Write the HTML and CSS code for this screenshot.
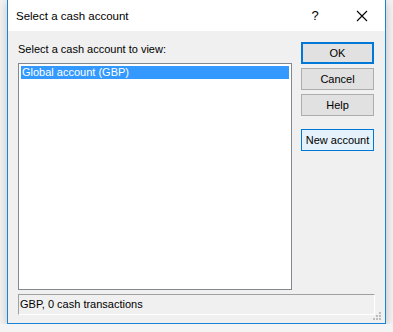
FILE: index.html
```html
<!DOCTYPE html>
<html lang="en">
<head>
  <meta charset="UTF-8" />
  <title>Select a cash account</title>
  <link rel="stylesheet" href="styles.css">
</head>
<body>
  <div class="window">
    <div class="titlebar">
      <span class="title">Select a cash account</span>
      <span class="help-btn">?</span>
      <span class="close-btn">
        <svg width="12" height="12" viewBox="0 0 12 12"><path d="M1 1 L11 11 M11 1 L1 11" stroke="#000" stroke-width="1.1" fill="none"/></svg>
      </span>
    </div>
    <div class="content">
      <div class="left">
        <div class="label">Select a cash account to view:</div>
        <div class="list">
          <div class="item selected">Global account (GBP)</div>
        </div>
      </div>
      <div class="buttons">
        <button class="btn default">OK</button>
        <button class="btn">Cancel</button>
        <button class="btn">Help</button>
        <button class="btn focus">New account</button>
      </div>
    </div>
    <div class="status">GBP, 0 cash transactions</div>
    <svg class="grip" width="9" height="9" viewBox="0 0 9 9" fill="#bdbdbd">
      <rect x="6" y="0" width="2" height="2"/>
      <rect x="3" y="3" width="2" height="2"/><rect x="6" y="3" width="2" height="2"/>
      <rect x="0" y="6" width="2" height="2"/><rect x="3" y="6" width="2" height="2"/><rect x="6" y="6" width="2" height="2"/>
    </svg>
  </div>
</body>
</html>
```

FILE: styles.css
```css
body {
  margin: 0;
  background-color: #f4f4f4;
  font-family: 'Liberation Sans', Arial, sans-serif;
  font-size: 11px;
  color: #000;
  overflow: hidden;
}

.window {
  position: relative;
  margin-left: 7px;
  width: 377px;
  height: 323px;
  background: #f0f0f0;
  border: 1px solid #1883d7;
  border-top: none;
  box-shadow: 0 2px 10px rgba(0,0,0,0.22);
}

.titlebar {
  height: 31px;
  background: #fff;
  display: flex;
  align-items: center;
  padding-left: 8px;
}

.title {
  flex: 1;
  font-size: 11.5px;
}

.help-btn {
  width: 16px;
  text-align: center;
  font-size: 13px;
  margin-right: 33px;
}

.close-btn {
  display: flex;
  width: 12px;
  margin-right: 17px;
}

.content {
  display: flex;
  padding: 11px 0 0 10px;
}

.left {
  width: 274px;
}

.label {
  height: 15px;
  line-height: 15px;
  margin-bottom: 6px;
}

.list {
  box-sizing: border-box;
  height: 227px;
  border: 1px solid #828790;
  background: #fff;
  padding: 2px;
}

.item {
  height: 13px;
  line-height: 13px;
  padding-left: 1px;
}

.item.selected {
  background: #3399ff;
  color: #fff;
}

.buttons {
  display: flex;
  flex-direction: column;
  gap: 4px;
  margin-left: 9px;
}

.btn {
  box-sizing: border-box;
  width: 73px;
  height: 22px;
  padding: 0;
  white-space: nowrap;
  font-family: inherit;
  font-size: 11px;
  color: #000;
  background: #e1e1e1;
  border: 1px solid #adadad;
}

.btn.default {
  border: 2px solid #0078d7;
}

.btn.focus {
  margin-top: 9px;
  background: #e5f1fb;
  border-color: #0078d7;
}

.status {
  box-sizing: border-box;
  margin: 4px 0 0 10px;
  width: 357px;
  height: 21px;
  line-height: 19px;
  padding-left: 1px;
  border: 1px solid #fff;
  border-top-color: #a0a0a0;
  border-left-color: #a0a0a0;
}

.grip {
  position: absolute;
  right: 3px;
  bottom: 2px;
}
```
